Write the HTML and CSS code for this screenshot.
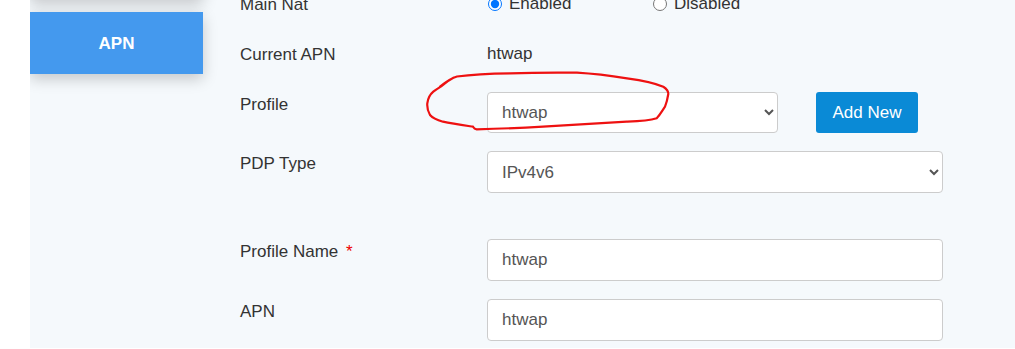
FILE: index.html
```html
<!DOCTYPE html>
<html lang="en">
<head>
  <meta charset="UTF-8" />
  <meta name="viewport" content="width=device-width, initial-scale=1.0"/>
  <title>APN Settings</title>
  <link rel="stylesheet" href="styles.css">
</head>
<body>
  <div class="page">
    <div class="sidebar">
      <div class="tab"></div>
      <div class="tab active">APN</div>
    </div>

    <form class="form">
      <div class="row row-text">
        <label class="label">Main Nat</label>
        <div class="field radios">
          <label class="radio"><input type="radio" name="nat" checked> Enabled</label>
          <label class="radio"><input type="radio" name="nat"> Disabled</label>
        </div>
      </div>

      <div class="row row-text">
        <label class="label">Current APN</label>
        <div class="field value">htwap</div>
      </div>

      <div class="row">
        <label class="label">Profile</label>
        <div class="field inline">
          <select class="control short">
            <option>htwap</option>
          </select>
          <button type="button" class="btn">Add New</button>
        </div>
      </div>

      <div class="row spaced">
        <label class="label">PDP Type</label>
        <div class="field">
          <select class="control">
            <option>IPv4v6</option>
          </select>
        </div>
      </div>

      <div class="row">
        <label class="label">Profile Name <span class="req">*</span></label>
        <div class="field">
          <input class="control" type="text" value="htwap">
        </div>
      </div>

      <div class="row">
        <label class="label">APN</label>
        <div class="field">
          <input class="control" type="text" value="htwap">
        </div>
      </div>
    </form>
  </div>

  <!-- hand drawn mark around the profile select -->
  <svg class="mark" width="1015" height="349" viewBox="0 0 1015 349">
    <path d="M440 86.5 C447 81 451 78 457 76.5 C475 74 492 73.5 510 73.3 C535 72.5 556 72.5 577 72.7 C598 74 612 76 627 78.3 C643 80.5 655 83 663.3 86.7 C667 89 668.5 91 668.3 94 C667.5 99 666.5 103 665 106.7 C662 111 660 115 656.7 118.3 C648 121 638 121.3 626.7 121.7 C598 123.5 570 125 543 126.7 C520 128 498 128.8 476.7 129.3 C474 129 473.5 127.5 473 126.7 C462 125 452 123.5 443 121.7 C437 120 432.5 118 430 115 C427.5 111 427 107 427.3 103.3 C428 98 430 94.5 433.3 91.7 C436 89.5 438.5 88 441.7 86 C445 83 449 80 453 78" fill="none" stroke="#ee1111" stroke-width="2.2" stroke-linecap="round" stroke-linejoin="round"/>
  </svg>
</body>
</html>
```

FILE: styles.css
```css
* {
  margin: 0;
  padding: 0;
  box-sizing: border-box;
  font-family: 'Liberation Sans', Arial, sans-serif;
}

body {
  background: #fff;
  overflow: hidden;
  color: #333;
}

.page {
  margin-left: 30px;
  height: 348px;
  background: #f5f9fc;
  display: flex;
  align-items: flex-start;
  overflow: hidden;
}

.sidebar {
  width: 173px;
  margin-top: -63px;
  display: flex;
  flex-direction: column;
  gap: 13px;
  flex-shrink: 0;
}

.tab {
  height: 62px;
  display: flex;
  justify-content: center;
  align-items: center;
  background: #e4e7ea;
  color: #333;
  font-size: 17px;
  font-weight: bold;
  box-shadow: 0 5px 14px rgba(0, 0, 0, 0.2);
}

.tab.active {
  background: #4499ee;
  color: #fff;
  padding-top: 2px;
}

.form {
  margin-left: 37px;
  margin-top: -8px;
  width: 703px;
}

.row {
  display: flex;
  align-items: flex-start;
  margin-bottom: 18px;
  font-size: 17px;
  line-height: 24px;
}

.row-text {
  height: 24px;
  margin-bottom: 26px;
}

.row.spaced {
  margin-bottom: 46px;
}

.label {
  width: 247px;
  flex-shrink: 0;
  color: #333;
  padding-top: 1px;
}

.req {
  color: #e00;
  margin-left: 3px;
}

.field {
  flex: 1;
}

.value {
  color: #333;
}

.radios {
  display: flex;
}

.radio {
  width: 165px;
  display: flex;
  align-items: center;
  gap: 7px;
  color: #333;
}

.radio input {
  margin: 0 0 0 1px;
  width: 14px;
  height: 14px;
}

.inline {
  display: flex;
  align-items: center;
  gap: 38px;
}

.control {
  width: 456px;
  height: 42px;
  border: 1px solid #ccc;
  border-radius: 4px;
  background: #fff;
  color: #555;
  font-size: 17px;
  padding: 0 10px 0 14px;
}

select.control {
  padding-left: 10px;
}

.control.short {
  width: 291px;
  height: 41px;
}

.btn {
  width: 102px;
  height: 41px;
  border: none;
  border-radius: 3px;
  background: #0a8ad6;
  color: #fff;
  font-size: 17px;
}

.mark {
  position: absolute;
  top: 0;
  left: 0;
  pointer-events: none;
}
```
